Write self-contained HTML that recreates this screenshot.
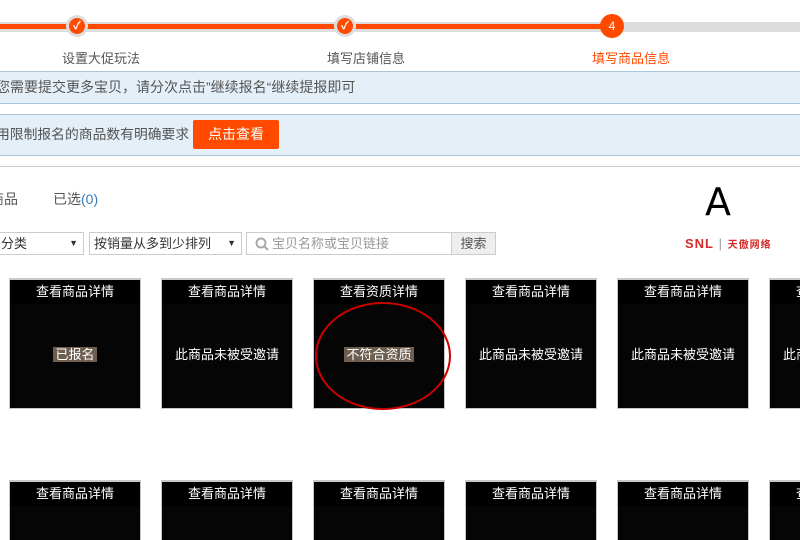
<!DOCTYPE html>
<html><head><meta charset="utf-8"><style>
*{margin:0;padding:0;box-sizing:border-box}
html,body{width:800px;height:540px;overflow:hidden}
body{background:#fff;position:relative;font-family:"Liberation Sans","Noto Sans CJK SC",sans-serif;font-size:13px;color:#555}
.abs{position:absolute}
.lbl{position:absolute;top:48px;font-size:13px;color:#555;white-space:nowrap}
.banner{position:absolute;left:0;width:800px;background:#e4eff8;border-top:1px solid #a9c5d9;border-bottom:1px solid #a9c5d9;font-size:14px;white-space:nowrap;overflow:hidden}
.card{position:absolute;width:132px;height:131px;background:#050505;border:1px solid #c8c8c8;border-top:2px solid #c8c8c8;overflow:hidden}
.card .h{width:130px;height:24px;background:#000;color:#fff;text-align:center;line-height:24px;font-size:13px}
.card .m{position:absolute;left:0;width:130px;top:64px;text-align:center;color:#fff;font-size:13px;white-space:nowrap}
.b2{height:60px;border-bottom:0}
.tag{background:#6d5e50;padding:0 2px}
</style></head><body>
<div class="abs" style="left:0;top:22px;width:800px;height:10px;background:#ddd"></div>
<div class="abs" style="left:0;top:24px;width:612px;height:5px;background:#ff4a00"></div>
<div class="abs" style="left:66px;top:15px;width:22px;height:22px;border-radius:50%;background:#ddd"></div>
<div class="abs" style="left:69px;top:18px;width:16px;height:16px;border-radius:50%;background:#ff4a00;color:#fff;font-size:11px;text-align:center;line-height:16px;font-weight:bold">✓</div>
<div class="abs" style="left:334px;top:15px;width:22px;height:22px;border-radius:50%;background:#ddd"></div>
<div class="abs" style="left:337px;top:18px;width:16px;height:16px;border-radius:50%;background:#ff4a00;color:#fff;font-size:11px;text-align:center;line-height:16px;font-weight:bold">✓</div>
<div class="abs" style="left:600px;top:14px;width:24px;height:24px;border-radius:50%;background:#ff4a00;color:#fff;font-size:12px;text-align:center;line-height:24px">4</div>
<div class="lbl" style="left:62px">设置大促玩法</div>
<div class="lbl" style="left:327px">填写店铺信息</div>
<div class="lbl" style="left:592px;color:#ff4a00">填写商品信息</div>
<div class="banner" style="top:71px;height:33px;line-height:31px;text-indent:-4px">您需要提交更多宝贝，请分次点击”继续报名“继续提报即可</div>
<div class="banner" style="top:114px;height:42px;line-height:40px;text-indent:-4px;font-size:13.8px">用限制报名的商品数有明确要求</div>
<div class="abs" style="left:193px;top:120px;width:86px;height:29px;background:#ff4a00;border-radius:2px;color:#fff;font-size:14px;text-align:center;line-height:29px">点击查看</div>
<div class="abs" style="left:0;top:166px;width:800px;height:1px;background:#ccc"></div>
<div class="abs" style="left:-10px;top:189px;font-size:14px;color:#555">商品</div>
<div class="abs" style="left:53px;top:189px;font-size:14px;color:#555">已选<span style="color:#3a7ab8">(0)</span></div>
<div class="abs" style="left:705px;top:180px;font-size:38px;color:#000;font-family:'DejaVu Sans',sans-serif">A</div>
<div class="abs" style="left:685px;top:236px;font-size:13px;font-weight:bold;color:#d42b2b;letter-spacing:1px;white-space:nowrap">SNL<span style="color:#999;font-weight:normal"> | </span><span style="font-size:10px">天傲网络</span></div>
<div class="abs" style="left:-2px;top:232px;width:86px;height:23px;border:1px solid #ccc;line-height:21px;padding-left:2px;color:#333">分类<span style="position:absolute;right:5px;font-size:9px">▼</span></div>
<div class="abs" style="left:89px;top:232px;width:153px;height:23px;border:1px solid #ccc;line-height:21px;padding-left:4px;color:#333">按销量从多到少排列<span style="position:absolute;right:5px;font-size:9px">▼</span></div>
<div class="abs" style="left:246px;top:232px;width:250px;height:23px;border:1px solid #ccc;line-height:21px;padding-left:25px;color:#999;font-size:13px">宝贝名称或宝贝链接
<svg style="position:absolute;left:8px;top:4px" width="14" height="14"><circle cx="6" cy="6" r="4.5" fill="none" stroke="#aaa" stroke-width="2"/><path d="M9 9l4 4" stroke="#aaa" stroke-width="2"/></svg>
<div style="position:absolute;right:0;top:0;width:44px;height:21px;background:#eee;border-left:1px solid #ccc;color:#555;text-align:center;padding:0">搜索</div></div>

<div class="card" style="left:9px;top:278px"><div class="h">查看商品详情</div><div class="m"><span class="tag">已报名</span></div></div>
<div class="card" style="left:161px;top:278px"><div class="h">查看商品详情</div><div class="m">此商品未被受邀请</div></div>
<div class="card" style="left:313px;top:278px"><div class="h">查看资质详情</div><div class="m"><span class="tag">不符合资质</span></div></div>
<div class="card" style="left:465px;top:278px"><div class="h">查看商品详情</div><div class="m">此商品未被受邀请</div></div>
<div class="card" style="left:617px;top:278px"><div class="h">查看商品详情</div><div class="m">此商品未被受邀请</div></div>
<div class="card" style="left:769px;top:278px;width:31px;border-right:0"><div class="h">查看商品详情</div><div class="m">此商品未被受邀请</div></div>

<div class="card b2" style="left:9px;top:480px"><div class="h">查看商品详情</div></div>
<div class="card b2" style="left:161px;top:480px"><div class="h">查看商品详情</div></div>
<div class="card b2" style="left:313px;top:480px"><div class="h">查看商品详情</div></div>
<div class="card b2" style="left:465px;top:480px"><div class="h">查看商品详情</div></div>
<div class="card b2" style="left:617px;top:480px"><div class="h">查看商品详情</div></div>
<div class="card b2" style="left:769px;top:480px;width:31px;border-right:0"><div class="h">查看商品详情</div></div>

<svg class="abs" style="left:0;top:0" width="800" height="540"><ellipse cx="383" cy="356" rx="67" ry="53" fill="none" stroke="#c00" stroke-width="2"/></svg>
</body></html>
